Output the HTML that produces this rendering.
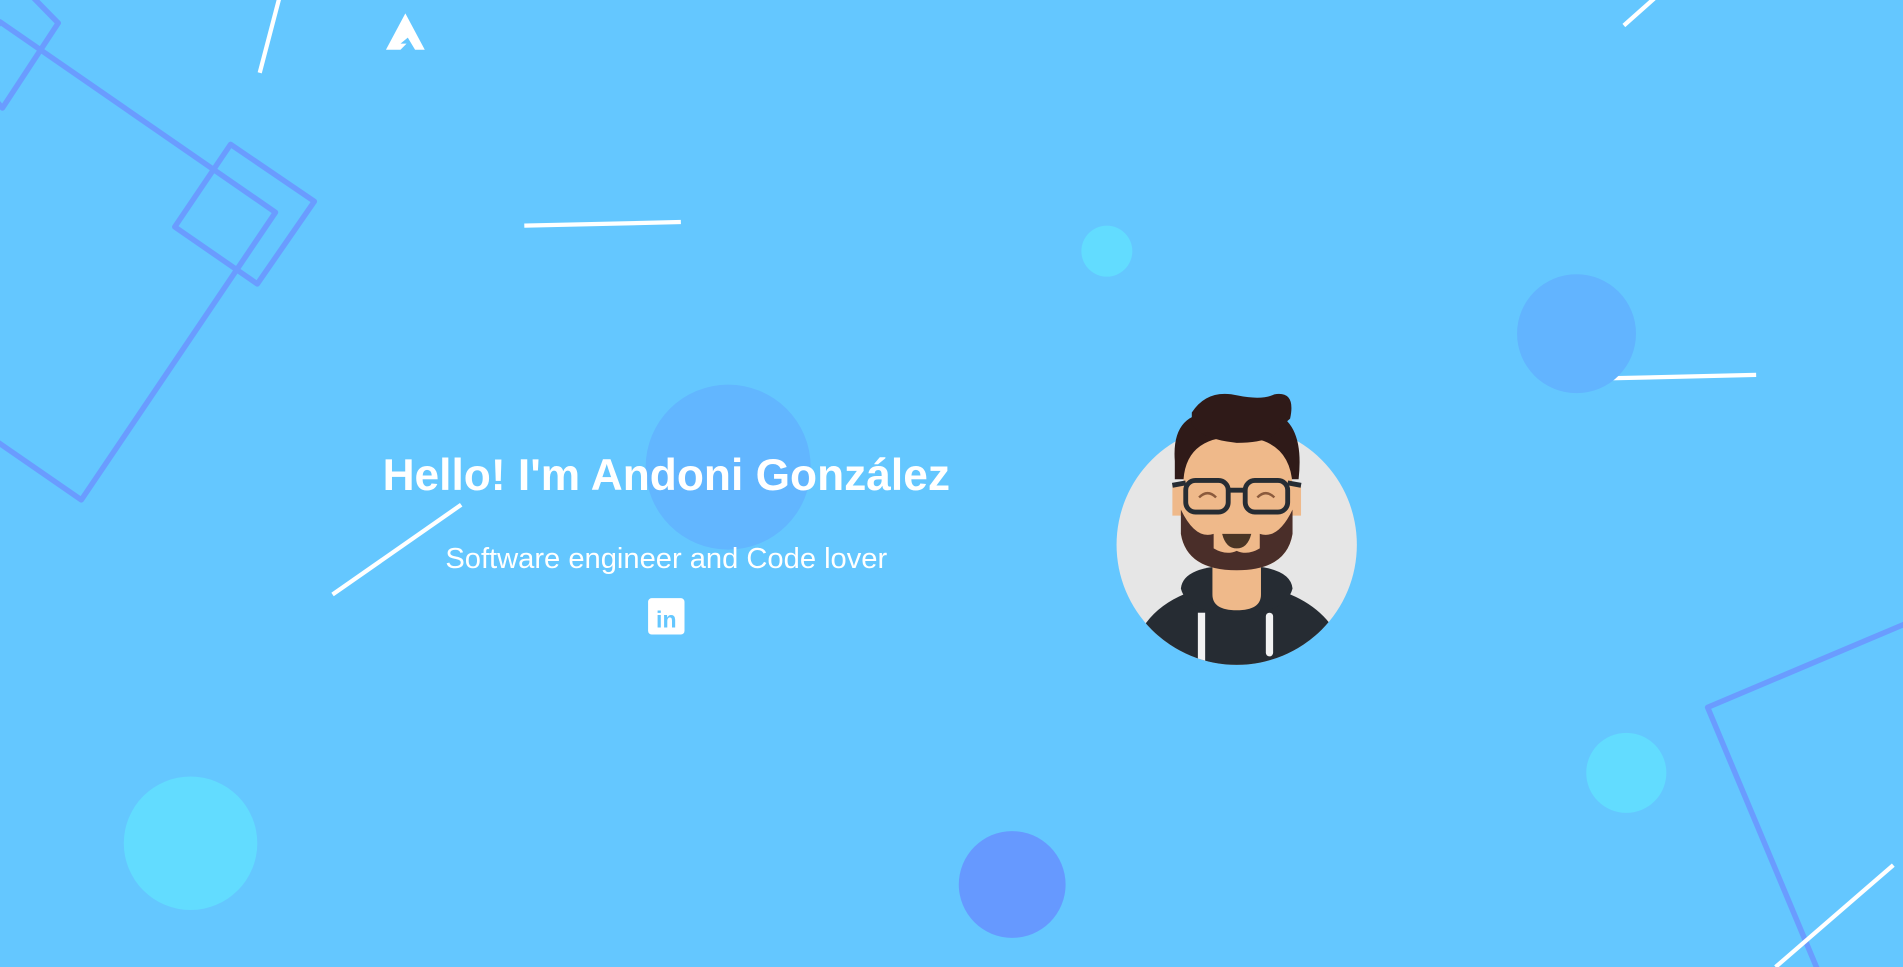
<!DOCTYPE html>
<html><head><meta charset="utf-8"><style>
html,body{margin:0;padding:0;width:1903px;height:967px;overflow:hidden;background:#64c7ff}
#w{position:relative;width:1903px;height:967px;overflow:hidden}
svg{display:block;overflow:hidden}
</style></head><body><div id="w">
<svg width="1903" height="967" viewBox="0 0 1568 797" preserveAspectRatio="none" xmlns="http://www.w3.org/2000/svg">
<rect width="1568" height="797" fill="#64c7ff"/>
<g fill="none" stroke="#6a9cff" stroke-width="4.5" stroke-linejoin="round">
<polygon points="0,18 227,175 67,412 -160,255"/>
<polygon points="190,119 259,166 212,234 144,187"/>
<polygon points="0,-30 48,19 2,89 -40,40"/>
<polyline points="1500,805 1407,583 1575,512"/>
</g>
<g stroke="#fff" stroke-width="3.5">
<line x1="214" y1="60" x2="231" y2="-5"/>
<line x1="432" y1="186" x2="561" y2="183"/>
<line x1="1338" y1="21" x2="1365" y2="-3"/>
<line x1="1318" y1="312" x2="1447" y2="309"/>
<line x1="274" y1="490" x2="380" y2="416"/>
<line x1="1463" y1="797" x2="1560" y2="713"/>
</g>
<circle cx="600" cy="385" r="68" fill="#62b6ff"/>
<circle cx="912" cy="207" r="21" fill="#62dcff"/>
<circle cx="1299" cy="275" r="49" fill="#62b4ff"/>
<circle cx="157" cy="695" r="55" fill="#62dcff"/>
<circle cx="834" cy="729" r="44" fill="#6699ff"/>
<circle cx="1340" cy="637" r="33" fill="#62dcff"/>
<polygon points="334,11 350,41 342,41 336,31 330,36 335,36 330,41 318,41" fill="#fff"/>
<text x="549" y="404" text-anchor="middle" font-family="Liberation Sans, sans-serif" font-weight="bold" font-size="36.5" fill="#fff">Hello! I'm Andoni González</text>
<text x="549" y="468" text-anchor="middle" font-family="Liberation Sans, sans-serif" font-size="24" fill="#fff">Software engineer and Code lover</text>
<rect x="534" y="493" width="30" height="30" rx="3" fill="#fff"/>
<text x="549" y="517" text-anchor="middle" font-family="Liberation Sans, sans-serif" font-weight="bold" font-size="19" fill="#64c7ff">in</text>
<defs><clipPath id="c"><circle cx="1019" cy="449" r="99"/></clipPath></defs>
<circle cx="1019" cy="449" r="99" fill="#e6e6e6"/>
<g clip-path="url(#c)">
<path d="M940,520 Q960,485 1019,480 Q1078,485 1100,520 L1100,560 L940,560Z" fill="#262c33"/>
<rect x="987" y="505" width="6" height="50" fill="#f2f2f2"/>
<rect x="1043" y="505" width="6" height="36" rx="3" fill="#f2f2f2"/>
</g>
<path d="M973,485 Q975,466 1019,466 Q1063,466 1065,485 Q1060,505 1019,507 Q978,505 973,485Z" fill="#262c33"/>
<path d="M999,460 L1039,460 L1039,490 Q1039,503 1019,503 Q999,503 999,490Z" fill="#efb98a"/>
<path d="M968,380 Q965,340 1000,340 L1050,340 Q1075,350 1070,395 L968,395Z" fill="#2f1a18"/>
<path d="M975,400 Q975,360 1019,360 Q1063,360 1065,400 L1065,440 Q1060,470 1019,470 Q978,470 973,440Z" fill="#efb98a"/>
<path d="M966,400 h10 v25 h-10z M1062,400 h10 v25 h-10z" fill="#efb98a"/>
<path d="M973,420 Q985,445 1000,440 Q1019,425 1038,440 Q1053,445 1065,420 L1065,440 Q1060,470 1019,470 Q978,470 973,440Z" fill="#4a2e29"/>
<path d="M1000,435 Q1019,425 1038,435 L1038,452 Q1028,458 1019,454 Q1010,458 1000,452Z" fill="#efb98a"/>
<path d="M1007,440 h24 Q1028,452 1019,452 Q1010,452 1007,440Z" fill="#4a3525"/>
<path d="M982,340 Q995,320 1020,326 Q1040,330 1050,325 Q1068,322 1063,345 L1055,352 Q1050,365 1019,365 Q990,362 982,350Z" fill="#2f1a18"/>
<g fill="none" stroke="#262c33" stroke-width="4">
<rect x="977" y="396" width="35" height="26" rx="8"/>
<rect x="1026" y="396" width="35" height="26" rx="8"/>
<path d="M966,400 L977,398 M1012,404 h14 M1061,398 L1072,400"/>
</g>
<g fill="none" stroke="#8b5a3c" stroke-width="2"><path d="M988,410 Q995,403 1002,410 M1036,410 Q1043,403 1050,410"/></g>
</svg>
</div></body></html>
